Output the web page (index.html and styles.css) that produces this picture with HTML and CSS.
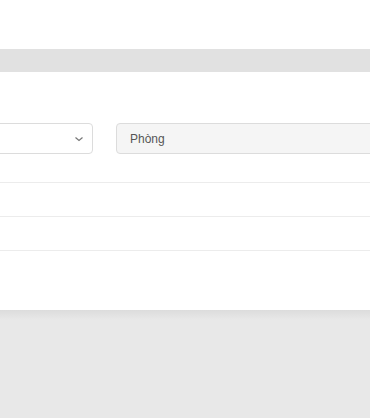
FILE: index.html
```html
<!DOCTYPE html>
<html lang="vi">
<head>
    <meta charset="UTF-8">
    <meta name="viewport" content="width=device-width, initial-scale=1.0">
    <title>Phòng</title>
    <link rel="stylesheet" href="styles.css">
</head>
<body>
    <div class="topbar"></div>
    <div class="toolbar"></div>
    <div class="panel">
        <div class="filters">
            <div class="select">
                <svg class="chevron" width="10" height="6" viewBox="0 0 10 6">
                    <path d="M1.5 1.5 L5 4.5 L8.5 1.5" fill="none" stroke="#777" stroke-width="1.2"/>
                </svg>
            </div>
            <div class="search">
                <span class="placeholder">Phòng</span>
            </div>
        </div>
        <div class="rows">
            <div class="row"></div>
            <div class="row"></div>
            <div class="row last"></div>
        </div>
    </div>
    <div class="footer"></div>
</body>
</html>
```

FILE: styles.css
```css
* {
    box-sizing: border-box;
    font-family: "Liberation Sans", Arial, sans-serif;
}
html, body {
    margin: 0;
    height: 100%;
}
body {
    display: flex;
    flex-direction: column;
    background: #e8e8e8;
    overflow: hidden;
}
.topbar {
    height: 49px;
    background: #fff;
}
.toolbar {
    height: 23px;
    background: #e1e1e1;
}
.panel {
    background: #fff;
    padding-top: 51px;
    overflow: hidden;
}
.filters {
    display: flex;
    gap: 23px;
    margin-left: -100px;
    margin-right: -100px;
    height: 31px;
}
.select {
    width: 193px;
    border: 1px solid #dcdcdc;
    border-radius: 4px;
    background: #fff;
    display: flex;
    align-items: center;
    justify-content: flex-end;
    padding-right: 8px;
}
.chevron {
    display: block;
}
.search {
    flex: 1;
    border: 1px solid #dcdcdc;
    border-radius: 4px;
    background: #f5f5f5;
    display: flex;
    align-items: center;
    padding-left: 13px;
}
.placeholder {
    font-size: 12px;
    color: #555;
}
.rows {
    padding-top: 28px;
}
.row {
    height: 34px;
    border-top: 1px solid #ececec;
}
.row.last {
    height: 60px;
}
.footer {
    flex: 1;
    background: linear-gradient(#dcdcdc, #e8e8e8 10px);
}
```
